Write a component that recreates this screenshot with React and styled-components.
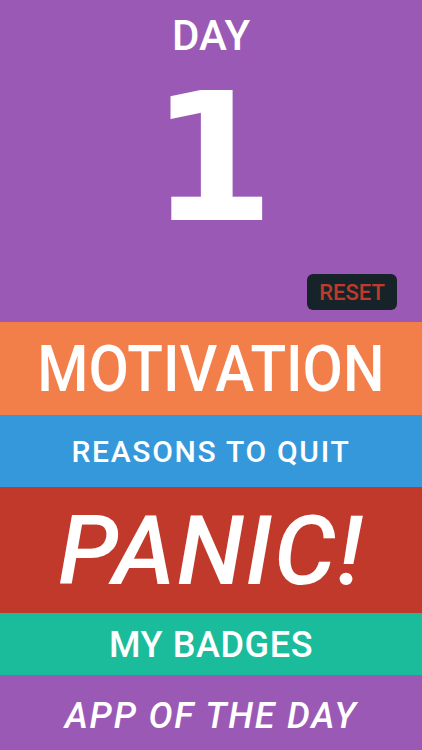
import React from "react";
import styled, { createGlobalStyle } from "styled-components";

const GlobalStyle = createGlobalStyle`
  html, body {
    margin: 0;
    padding: 0;
    background: #9b59b6;
  }
  * {
    box-sizing: border-box;
  }
`;

const Screen = styled.div`
  width: 422px;
  height: 750px;
  display: flex;
  flex-direction: column;
  font-family: Roboto, "Liberation Sans", Arial, sans-serif;
  color: #ffffff;
  overflow: hidden;
`;

const Counter = styled.section`
  height: 322px;
  background: #9b59b6;
  display: flex;
  flex-direction: column;
  align-items: center;
  padding-top: 12px;
  padding-right: 25px;
`;

const DayLabel = styled.div`
  font-size: 42px;
  font-weight: 500;
  line-height: 48px;
  padding-left: 25px;
`;

const DayNumber = styled.div`
  font-family: "DejaVu Sans", sans-serif;
  font-size: 178px;
  font-weight: 700;
  line-height: 140px;
  margin-top: 29px;
  padding-left: 28px;
`;

const ResetButton = styled.button`
  align-self: flex-end;
  margin-top: auto;
  margin-bottom: 12px;
  width: 90px;
  height: 36px;
  border: none;
  border-radius: 6px;
  background: #16242a;
  color: #c0392b;
  font-family: Roboto, "Liberation Sans", Arial, sans-serif;
  font-size: 22px;
  font-weight: 500;
  padding: 0;
`;

const Band = styled.div`
  height: ${(p) => p.$h}px;
  background: ${(p) => p.$bg};
  display: flex;
  align-items: center;
  justify-content: center;
  padding-top: ${(p) => p.$nudge || 0}px;
  font-size: ${(p) => p.$size}px;
  font-weight: 500;
  line-height: 1;
  white-space: nowrap;
`;

const Label = styled.span`
  display: inline-block;
  letter-spacing: ${(p) => p.$ls || 0}px;
  font-style: ${(p) => (p.$italic ? "italic" : "normal")};
  transform: scaleX(${(p) => p.$sx || 1});
`;

export default function App() {
  return (
    <>
      <GlobalStyle />
      <Screen>
        <Counter>
          <DayLabel>DAY</DayLabel>
          <DayNumber>1</DayNumber>
          <ResetButton>RESET</ResetButton>
        </Counter>
        <Band $h={93} $bg="#f27e4a" $size={65} $nudge={2}>
          <Label $sx={0.9}>MOTIVATION</Label>
        </Band>
        <Band $h={72} $bg="#3498db" $size={30} $nudge={2}>
          <Label $ls={1.7}>REASONS TO QUIT</Label>
        </Band>
        <Band $h={126} $bg="#c0392b" $size={97} $nudge={2}>
          <Label $ls={1.8} $italic>PANIC!</Label>
        </Band>
        <Band $h={62} $bg="#1abc9c" $size={36} $nudge={2}>
          <Label $ls={0.6}>MY BADGES</Label>
        </Band>
        <Band $h={75} $bg="#9b59b6" $size={36} $nudge={6}>
          <Label $ls={1.8} $italic>APP OF THE DAY</Label>
        </Band>
      </Screen>
    </>
  );
}
